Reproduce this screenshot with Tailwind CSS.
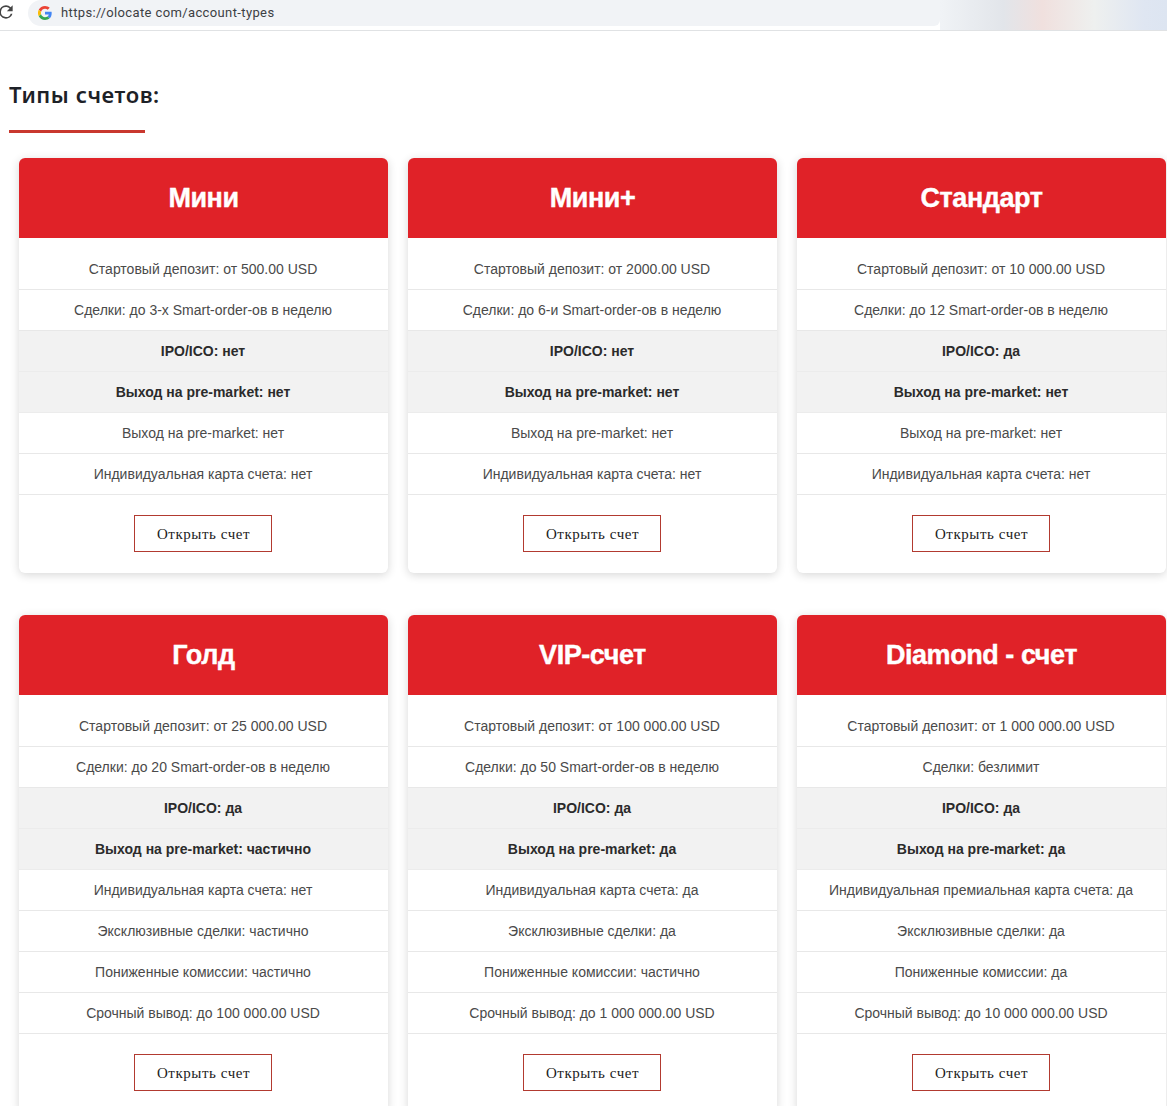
<!DOCTYPE html>
<html lang="en">
<head>
    <meta charset="UTF-8">
    <meta name="viewport" content="width=device-width, initial-scale=1.0">
    <title>Типы счетов</title>
    <script src="https://cdn.jsdelivr.net/npm/@tailwindcss/browser@4"></script>
</head>
<body class="bg-white h-[1106px] overflow-hidden font-['Liberation_Sans',sans-serif]">
    <!-- browser address bar -->
    <div class="h-[31px] flex bg-white border-b border-[#e0e2e4] overflow-hidden">
        <div class="w-[28px] shrink-0 relative">
            <svg class="absolute left-[-4px] top-[2px]" width="20" height="20" viewBox="0 0 24 24" fill="#444">
                <path d="M17.65 6.35A7.95 7.95 0 0 0 12 4a8 8 0 1 0 7.73 10h-2.08A6 6 0 1 1 12 6c1.66 0 3.14.69 4.22 1.78L13 11h7V4l-2.35 2.35z"/>
            </svg>
        </div>
        <div class="w-[912px] shrink-0 h-[26px] bg-[#f1f3f6] rounded-l-[13px] rounded-br-[6px] flex items-center pl-[10px] gap-[9px]">
            <svg width="14" height="14" viewBox="0 0 48 48">
                <path fill="#EA4335" d="M24 9.5c3.5 0 6.7 1.2 9.2 3.600l6.900-6.900C35.900 2.400 30.400 0 24 0 14.600 0 6.500 5.400 2.600 13.200l8 6.200C12.500 13.700 17.800 9.500 24 9.500z"/>
                <path fill="#4285F4" d="M46.900 24.500c0-1.600-.1-3.100-.4-4.500H24v9h12.900c-.6 3-2.200 5.500-4.700 7.200l7.700 6c4.500-4.200 7-10.300 7-17.700z"/>
                <path fill="#FBBC05" d="M10.600 28.600A14.500 14.500 0 0 1 10.600 19.400l-8-6.200a24 24 0 0 0 0 21.600l8-6.200z"/>
                <path fill="#34A853" d="M24 48c6.500 0 11.900-2.100 15.900-5.800l-7.700-6c-2.200 1.400-4.900 2.300-8.200 2.300-6.200 0-11.500-4.200-13.400-9.900l-8 6.200C6.500 42.600 14.600 48 24 48z"/>
            </svg>
            <span class="font-['Roboto',sans-serif] text-[13px] text-[#3c4043] tracking-[0.38px]">https://olocate com/account-types</span>
        </div>
        <div class="flex-1 bg-[linear-gradient(90deg,#f0f3f6_0%,#e2e5ea_28%,#f0e0de_45%,#eef0ef_68%,#dfe6f2_90%,#dde5f1_100%)]"></div>
    </div>

    <div class="pl-[9px] pt-[48px]">
        <h2 class="font-['Noto_Sans',sans-serif] font-semibold text-[22px] leading-[30px] tracking-[0.55px] text-[#1d2127]">Типы счетов:</h2>
        <div class="w-[136px] h-[3px] bg-[#c9382e] mt-[21px]"></div>
    </div>

    <div id="cards" class="grid grid-cols-[369px_369px_369px] gap-x-5 gap-y-[42px] pl-[19px] pt-[25px]"></div>

    <script>
        const plans = [
            { name: 'Мини', rows: ['Стартовый депозит: от 500.00 USD', 'Сделки: до 3-х Smart-order-ов в неделю', 'IPO/ICO: нет', 'Выход на pre-market: нет', 'Выход на pre-market: нет', 'Индивидуальная карта счета: нет'] },
            { name: 'Мини+', rows: ['Стартовый депозит: от 2000.00 USD', 'Сделки: до 6-и Smart-order-ов в неделю', 'IPO/ICO: нет', 'Выход на pre-market: нет', 'Выход на pre-market: нет', 'Индивидуальная карта счета: нет'] },
            { name: 'Стандарт', rows: ['Стартовый депозит: от 10 000.00 USD', 'Сделки: до 12 Smart-order-ов в неделю', 'IPO/ICO: да', 'Выход на pre-market: нет', 'Выход на pre-market: нет', 'Индивидуальная карта счета: нет'] },
            { name: 'Голд', rows: ['Стартовый депозит: от 25 000.00 USD', 'Сделки: до 20 Smart-order-ов в неделю', 'IPO/ICO: да', 'Выход на pre-market: частично', 'Индивидуальная карта счета: нет', 'Эксклюзивные сделки: частично', 'Пониженные комиссии: частично', 'Срочный вывод: до 100 000.00 USD'] },
            { name: 'VIP-счет', rows: ['Стартовый депозит: от 100 000.00 USD', 'Сделки: до 50 Smart-order-ов в неделю', 'IPO/ICO: да', 'Выход на pre-market: да', 'Индивидуальная карта счета: да', 'Эксклюзивные сделки: да', 'Пониженные комиссии: частично', 'Срочный вывод: до 1 000 000.00 USD'] },
            { name: 'Diamond - счет', rows: ['Стартовый депозит: от 1 000 000.00 USD', 'Сделки: безлимит', 'IPO/ICO: да', 'Выход на pre-market: да', 'Индивидуальная премиальная карта счета: да', 'Эксклюзивные сделки: да', 'Пониженные комиссии: да', 'Срочный вывод: до 10 000 000.00 USD'] }
        ];

        function rowHtml(text, i) {
            // rows 3 and 4 are the highlighted ones
            const look = (i === 2 || i === 3)
                ? 'bg-[#f2f2f2] font-bold text-[#2b2b2b] border-[#ececec]'
                : 'text-[#4a4a4a] border-[#e8e8e8]';
            const height = i === 0 ? 'h-[52px] pt-[11px]' : 'h-[41px]';
            return `<div class="${height} ${look} border-b pr-px flex items-center justify-center text-[14px] leading-[20px]">${text}</div>`;
        }

        document.getElementById('cards').innerHTML = plans.map(plan => `
            <div class="bg-white rounded-[6px] shadow-[0_2px_10px_rgba(0,0,0,0.16)]">
                <div class="h-[80px] bg-[#e02228] rounded-t-[6px] flex items-center justify-center text-white text-[27px] font-bold tracking-[-0.45px] [-webkit-text-stroke:0.4px_white]">${plan.name}</div>
                ${plan.rows.map(rowHtml).join('')}
                <div class="h-[78px] pt-[20px] pr-[2px] flex justify-center">
                    <a class="w-[138px] h-[37px] pt-px pl-[2px] border border-[#b23a30] flex items-center justify-center font-['Liberation_Serif',serif] text-[15px] tracking-[0.55px] text-[#222]">Открыть счет</a>
                </div>
            </div>`).join('');
    </script>
</body>
</html>
